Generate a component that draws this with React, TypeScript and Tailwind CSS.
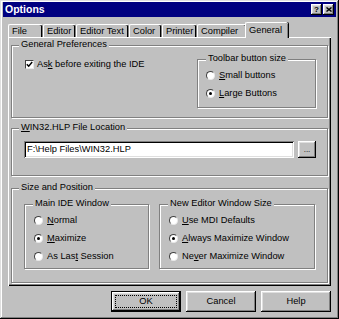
import React from "react";

const raised =
  "shadow-[inset_-1px_-1px_0_#000,inset_1px_1px_0_#fff,inset_-2px_-2px_0_#808080,inset_2px_2px_0_#dfdfdf]";

function Group({
  label,
  className,
  labelClass,
  children,
}: {
  label: React.ReactNode;
  className: string;
  labelClass?: string;
  children?: React.ReactNode;
}) {
  return (
    <div
      className={
        "relative border border-[#808080] shadow-[1px_1px_0_#fff,inset_1px_1px_0_#fff] " +
        className
      }
    >
      <span
        className={
          "absolute top-[-7px] px-[2px] bg-[#c0c0c0] leading-[11px] whitespace-nowrap " +
          (labelClass ?? "left-[7px]")
        }
      >
        {label}
      </span>
      {children}
    </div>
  );
}

function Radio({ checked, children }: { checked?: boolean; children: React.ReactNode }) {
  return (
    <div className="flex items-center h-[11px] leading-[11px] whitespace-nowrap">
      <span className="w-[9px] h-[9px] rounded-full bg-white border border-t-[#404040] border-l-[#404040] border-b-[#e8e8e8] border-r-[#e8e8e8] flex items-center justify-center shrink-0">
        {checked && <span className="w-[3px] h-[3px] rounded-full bg-black" />}
      </span>
      <span className="ml-[4px]">{children}</span>
    </div>
  );
}

function Tab({ w, children, selected }: { w: string; children: React.ReactNode; selected?: boolean }) {
  if (selected) {
    return (
      <div
        className={
          "relative z-10 h-[16px] mb-[-1px] ml-[-2px] mr-[-2px] bg-[#c0c0c0] border-t border-l border-white rounded-tl-[2px] rounded-tr-[2px] shadow-[inset_-1px_0_0_#808080,1px_0_0_#000] pl-[3px] pt-[2px] leading-[11px] whitespace-nowrap " +
          w
        }
      >
        {children}
      </div>
    );
  }
  return (
    <div
      className={
        "h-[13px] bg-[#c0c0c0] border-t border-l border-white rounded-tl-[2px] rounded-tr-[2px] shadow-[inset_-1px_0_0_#808080,inset_-2px_0_0_#000] pl-[3px] pt-[1px] leading-[11px] whitespace-nowrap " +
        w
      }
    >
      {children}
    </div>
  );
}

function Button({ children, def }: { children: React.ReactNode; def?: boolean }) {
  if (def) {
    return (
      <div className="relative w-[70px] h-[21px] border border-black bg-[#c0c0c0] flex items-center justify-center">
        <div className={"absolute inset-0 " + raised} />
        <div className="absolute inset-[3px] border border-dotted border-black" />
        <span className="relative">{children}</span>
      </div>
    );
  }
  return (
    <div className={"w-[70px] h-[21px] bg-[#c0c0c0] flex items-center justify-center " + raised}>
      {children}
    </div>
  );
}

export default function App() {
  return (
    <div className="w-[339px] h-[319px] bg-[#c0c0c0] [font-family:'Liberation_Sans',Arial,sans-serif] text-[9.3px] text-black overflow-hidden">
      <div
        className={
          "w-[339px] h-[319px] pt-[2px] px-[3px] flex flex-col shadow-[inset_-1px_-1px_0_#000,inset_1px_1px_0_#dfdfdf,inset_-2px_-2px_0_#808080,inset_2px_2px_0_#fff]"
        }
      >
        {/* Title bar */}
        <div className="h-[15px] bg-[#000080] flex items-center justify-between pl-[2px] pr-[2px]">
          <span className="text-white font-bold text-[10.5px] leading-[15px]">Options</span>
          <div className="flex gap-[1px]">
            <div className={"w-[11px] h-[11px] bg-[#c0c0c0] flex items-center justify-center " + raised}>
              <span className="font-bold text-[8px] leading-[8px]">?</span>
            </div>
            <div className={"w-[11px] h-[11px] bg-[#c0c0c0] flex items-center justify-center " + raised}>
              <svg width="6" height="5" viewBox="0 0 6 5">
                <path d="M0.5 0.5 L5.5 4.5 M5.5 0.5 L0.5 4.5" stroke="#000" strokeWidth="1.4" />
              </svg>
            </div>
          </div>
        </div>

        {/* Tabs */}
        <div className="mt-[5px] ml-[5px] h-[15px] flex items-end">
          <Tab w="w-[35px]">File</Tab>
          <Tab w="w-[33px]">Editor</Tab>
          <Tab w="w-[53px]">Editor Text</Tab>
          <Tab w="w-[33px]">Color</Tab>
          <Tab w="w-[35px]">Printer</Tab>
          <Tab w="w-[50px]">Compiler</Tab>
          <Tab w="w-[43px]" selected>
            General
          </Tab>
        </div>

        {/* Panel */}
        <div className="ml-[5px] w-[323px] h-[249px] bg-[#c0c0c0] shadow-[inset_1px_1px_0_#fff,inset_-1px_-1px_0_#000,inset_-2px_-2px_0_#808080] pt-[8px] pl-[3px] pr-[3px] flex flex-col">
          {/* General Preferences */}
          <Group label="General Preferences" className="h-[73px]">
            <div className="flex justify-between pt-[13px]">
              <div className="ml-[13px] flex items-center h-[11px] leading-[11px] whitespace-nowrap">
                <span className="w-[9px] h-[9px] bg-white border border-t-[#404040] border-l-[#404040] border-b-[#e8e8e8] border-r-[#e8e8e8] flex items-center justify-center">
                  <svg width="7" height="7" viewBox="0 0 7 7">
                    <path d="M0.8 3.2 L2.7 5.2 L6.2 1" stroke="#000" strokeWidth="1.5" fill="none" />
                  </svg>
                </span>
                <span className="ml-[3px]">
                  As<u>k</u> before exiting the IDE
                </span>
              </div>
              <Group label="Toolbar button size" labelClass="left-[8px]" className="w-[119px] h-[49px] mr-[11px]">
                <div className="pl-[8px] pt-[10px] flex flex-col gap-[7px]">
                  <Radio>
                    <u>S</u>mall buttons
                  </Radio>
                  <Radio checked>
                    <u>L</u>arge Buttons
                  </Radio>
                </div>
              </Group>
            </div>
          </Group>

          {/* WIN32.HLP */}
          <Group
            label={
              <>
                <u>W</u>IN32.HLP File Location
              </>
            }
            className="mt-[10px] h-[48px]"
          >
            <div className="flex items-center mt-[12px] ml-[12px]">
              <div className="w-[270px] h-[17px] bg-white shadow-[inset_1px_1px_0_#808080,inset_-1px_-1px_0_#fff,inset_2px_2px_0_#000,inset_-2px_-2px_0_#dfdfdf] pl-[3px] flex items-center leading-[11px] whitespace-nowrap">
                {"F:\\Help Files\\WIN32.HLP"}
              </div>
              <div className={"ml-[4px] w-[18px] h-[17px] bg-[#c0c0c0] flex items-center justify-center " + raised}>
                <span className="text-[8px] leading-[8px] mt-[1px]">...</span>
              </div>
            </div>
          </Group>

          {/* Size and Position */}
          <Group label="Size and Position" className="mt-[12px] h-[95px]">
            <div className="flex mt-[15px] ml-[12px]">
              <Group label="Main IDE Window" labelClass="left-[8px]" className="w-[125px] h-[65px]">
                <div className="pl-[9px] pt-[10px] flex flex-col gap-[7px]">
                  <Radio>
                    <u>N</u>ormal
                  </Radio>
                  <Radio checked>
                    <u>M</u>aximize
                  </Radio>
                  <Radio>
                    As Las<u>t</u> Session
                  </Radio>
                </div>
              </Group>
              <Group label="New Editor Window Size" labelClass="left-[8px]" className="ml-[10px] w-[156px] h-[65px]">
                <div className="pl-[9px] pt-[10px] flex flex-col gap-[7px]">
                  <Radio>
                    <u>U</u>se MDI Defaults
                  </Radio>
                  <Radio checked>
                    <u>A</u>lways Maximize Window
                  </Radio>
                  <Radio>
                    Ne<u>v</u>er Maximize Window
                  </Radio>
                </div>
              </Group>
            </div>
          </Group>
        </div>

        {/* Buttons */}
        <div className="ml-[5px] w-[323px] mt-[5px] flex justify-end gap-[5px]">
          <Button def>OK</Button>
          <Button>Cancel</Button>
          <Button>Help</Button>
        </div>
      </div>
    </div>
  );
}
